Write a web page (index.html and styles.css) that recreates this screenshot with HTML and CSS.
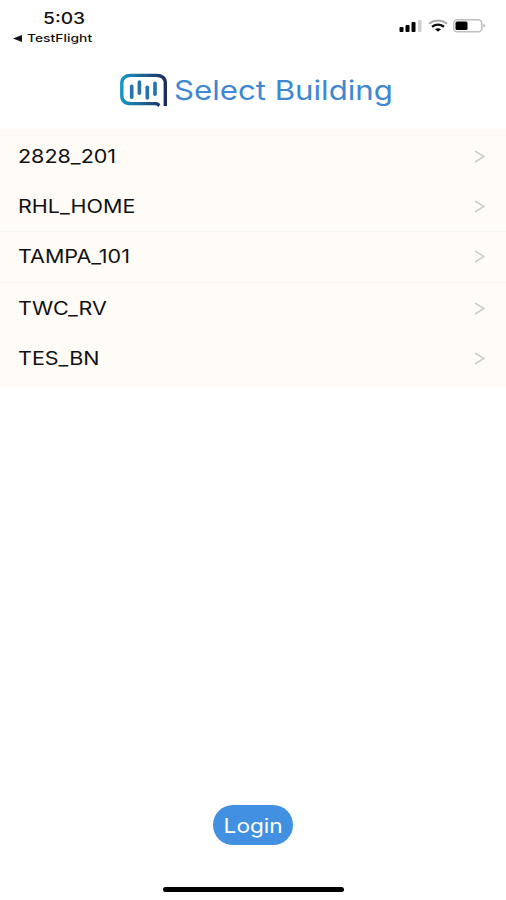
FILE: index.html
```
<!DOCTYPE html>
<html lang="en">
  <head>
    <meta charset="UTF-8" />
    <title>Select Building</title>
    <link rel="stylesheet" href="styles.css">
  </head>
  <body>
    <div class="status-bar">
      <div class="status-left">
        <div class="time"><span class="wide">5:03</span></div>
        <div class="back-app">
          <svg width="9" height="7" viewBox="0 0 9 7"><path d="M0 3.5L9 0V7Z" fill="#111" /></svg>
          <span class="wide">TestFlight</span>
        </div>
      </div>
      <div class="status-icons">
        <svg class="signal" width="24" height="14" viewBox="0 0 24 14">
          <rect x="0.5" y="8" width="4" height="5" rx="1" fill="#000" />
          <rect x="6.5" y="6" width="4" height="7" rx="1" fill="#000" />
          <rect x="12.5" y="3" width="4" height="10" rx="1" fill="#000" />
          <rect x="19" y="1" width="3.5" height="12" rx="1" fill="#cfcfcf" />
        </svg>
        <svg class="wifi" width="20" height="14" viewBox="0 0 20 14">
          <path d="M1 4.6Q10 -1.6 19 4.6" fill="none" stroke="#aaa" stroke-width="2" />
          <path d="M4 7.8Q10 3.6 16 7.8" fill="none" stroke="#111" stroke-width="2.3" />
          <path d="M7 10.3Q10 8.4 13 10.3L10 12.8Z" fill="#000" />
        </svg>
        <svg class="battery" width="33" height="14" viewBox="0 0 33 14">
          <rect x="0.8" y="0.8" width="28" height="12" rx="3.5" fill="#fff" stroke="#bdbdbd" stroke-width="1.4" />
          <rect x="2.5" y="2.5" width="12" height="8.6" rx="1.5" fill="#000" />
          <path d="M30.5 4.8Q33.2 6.8 30.5 8.8Z" fill="#999" />
        </svg>
      </div>
    </div>

    <div class="header">
      <svg class="logo" width="48" height="34" viewBox="0 0 48 34">
        <defs>
          <linearGradient id="frame" x1="0" y1="0" x2="1" y2="0">
            <stop offset="0" stop-color="#1795c0" />
            <stop offset="0.5" stop-color="#1c6291" />
            <stop offset="1" stop-color="#1c2c5e" />
          </linearGradient>
        </defs>
        <path d="M45.3 33V10.5Q45.3 2.4 36 2.4H11Q1.8 2.4 1.8 10.5V22.5Q1.8 30.6 11 30.6H36.5L39.5 32.5" fill="none" stroke="url(#frame)" stroke-width="3.4" />
        <g stroke="#2374ad" stroke-width="3.6" stroke-linecap="round">
          <path d="M11.7 13.3V24.3" />
          <path d="M19.4 9V20.3" />
          <path d="M27.3 14.3V24.9" />
          <path d="M35 10.2V21.3" />
        </g>
      </svg>
      <h1><span class="wide">Select Building</span></h1>
    </div>

    <ul class="buildings">
      <li><span class="wide">2828_201</span><svg class="chevron" width="11" height="13" viewBox="0 0 11 13"><path d="M1 1L10 6.5L1 12" /></svg></li>
      <li class="line"><span class="wide">RHL_HOME</span><svg class="chevron" width="11" height="13" viewBox="0 0 11 13"><path d="M1 1L10 6.5L1 12" /></svg></li>
      <li class="line"><span class="wide">TAMPA_101</span><svg class="chevron" width="11" height="13" viewBox="0 0 11 13"><path d="M1 1L10 6.5L1 12" /></svg></li>
      <li><span class="wide">TWC_RV</span><svg class="chevron" width="11" height="13" viewBox="0 0 11 13"><path d="M1 1L10 6.5L1 12" /></svg></li>
      <li><span class="wide">TES_BN</span><svg class="chevron" width="11" height="13" viewBox="0 0 11 13"><path d="M1 1L10 6.5L1 12" /></svg></li>
    </ul>

    <div class="footer">
      <button class="login"><span class="wide">Login</span></button>
      <div class="home-bar"></div>
    </div>
  </body>
</html>
```

FILE: styles.css
```
* {
  margin: 0;
  padding: 0;
  box-sizing: border-box;
}
body {
  height: 900px;
  overflow: hidden;
  background-color: #fff;
  font-family: Inter, "Liberation Sans", sans-serif;
  color: #111;
  display: flex;
  flex-direction: column;
}
svg {
  display: block;
}
.wide {
  display: inline-block;
  white-space: nowrap;
  transform: scaleX(1.195);
  transform-origin: left center;
}
.status-bar {
  height: 50px;
  display: flex;
  justify-content: space-between;
}
.status-left {
  padding: 9px 0 0 13px;
}
.time {
  padding-left: 30px;
  font-size: 15.5px;
  line-height: 19px;
  font-weight: 500;
}
.time .wide {
  transform: scaleX(1.24);
}
.back-app {
  display: flex;
  align-items: center;
  gap: 5px;
  height: 20px;
  font-size: 11px;
  font-weight: 500;
}
.back-app .wide {
  transform: scaleX(1.26);
}
.status-icons {
  display: flex;
  gap: 5px;
  padding: 19px 20px 0 0;
}
.header {
  height: 79px;
  display: flex;
  align-items: center;
  padding: 1px 0 0 120px;
}
.logo {
  margin-right: 5.5px;
}
h1 {
  padding-top: 2px;
  font-size: 27px;
  font-weight: 400;
  line-height: 34px;
  color: #3f87d3;
}
h1 .wide {
  transform: scaleX(1.155);
}
.buildings {
  list-style: none;
  height: 258px;
  padding-top: 2px;
  background-color: #fffbf7;
}
.buildings li {
  height: 50.6px;
  display: flex;
  align-items: center;
  justify-content: space-between;
  padding: 0 21px 0 18px;
  font-size: 18px;
}
.buildings .line {
  border-bottom: 1px solid #f8f4f1;
}
.chevron {
  fill: none;
  stroke: #cfcdca;
  stroke-width: 1.5;
}
.footer {
  margin-top: auto;
  height: 95px;
  display: flex;
  flex-direction: column;
  align-items: center;
}
.login {
  width: 80px;
  height: 40px;
  padding-top: 2px;
  border: none;
  border-radius: 20px;
  background-color: #4190e1;
  color: #fff;
  font-family: inherit;
  font-size: 20px;
}
.login .wide {
  transform: scaleX(1.13);
  transform-origin: center;
}
.home-bar {
  width: 181px;
  height: 5px;
  margin-top: 42px;
  border-radius: 3px;
  background-color: #000;
}
```
